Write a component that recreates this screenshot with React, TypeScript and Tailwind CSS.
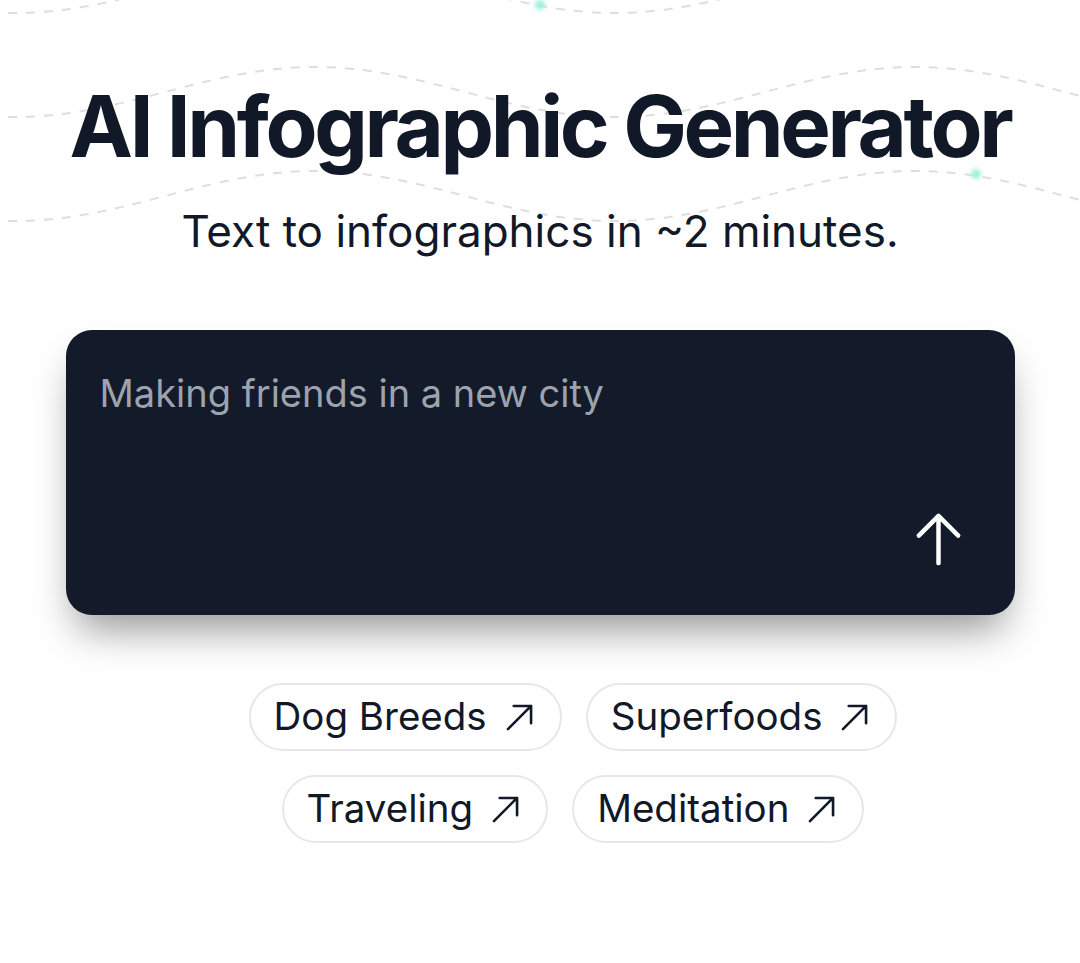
import React from "react";

const PERIOD = 600;
const X0 = 15;
const AMP = 25;

function wavePath(c: number): string {
  const pts: string[] = [];
  for (let x = -10; x <= 1090; x += 5) {
    const y = c + AMP * Math.cos((2 * Math.PI * (x - X0)) / PERIOD);
    pts.push(`${x === -10 ? "M" : "L"}${x} ${y.toFixed(2)}`);
  }
  return pts.join(" ");
}

function Background() {
  return (
    <svg
      className="absolute left-0 top-0 pointer-events-none"
      width="1080"
      height="260"
      viewBox="0 0 1080 260"
      fill="none"
    >
      <defs>
        <filter id="glow" x="-100%" y="-100%" width="300%" height="300%">
          <feGaussianBlur stdDeviation="2" />
        </filter>
      </defs>
      {[-12, 92, 196].map((c) => (
        <path
          key={c}
          d={wavePath(c)}
          stroke="#dedede"
          strokeWidth="2"
          strokeDasharray="9 9"
        />
      ))}
      <circle cx="540" cy="5" r="5" fill="#99f0dc" filter="url(#glow)" />
      <circle cx="976" cy="174" r="5" fill="#99f0dc" filter="url(#glow)" />
    </svg>
  );
}

function ArrowUpRight() {
  return (
    <svg
      width="37"
      height="37"
      viewBox="0 0 24 24"
      fill="none"
      stroke="currentColor"
      strokeWidth="1.7"
      strokeLinecap="round"
      strokeLinejoin="round"
    >
      <path d="m4.5 19.5 15-15m0 0H8.25m11.25 0v11.25" />
    </svg>
  );
}

function Pill({ label }: { label: string }) {
  return (
    <button className="flex h-[68px] items-center gap-[14px] rounded-full border-2 border-[#e5e7eb] bg-white pl-[23px] pr-[22px] text-[38.5px] text-[#111827]">
      <span>{label}</span>
      <ArrowUpRight />
    </button>
  );
}

export default function App() {
  return (
    <div
      className="relative min-h-[963px] w-full overflow-hidden bg-white text-[#111827]"
      style={{ fontFamily: "Inter, 'Noto Sans', sans-serif" }}
    >
      <Background />
      <div className="relative flex flex-col items-center">
        <h1 className="mt-[84px] text-[85px] font-bold leading-none tracking-[-0.04em] text-[#111827]">
          AI Infographic Generator
        </h1>
        <p className="mt-[36px] text-[44px] leading-[52px] text-[#111827]">
          Text to infographics in ~2 minutes.
        </p>
        <div className="mt-[73px] flex h-[285px] w-[949px] flex-col rounded-[26px] bg-[#131a29] pb-[44px] pl-[34px] pr-[45px] pt-[40px] shadow-[0_24px_40px_-10px_rgba(0,0,0,0.42)]">
          <textarea
            className="w-full flex-1 resize-none bg-transparent text-[38px] leading-[46px] text-white outline-none placeholder:text-[#9ca3af]"
            placeholder="Making friends in a new city"
          />
          <div className="flex justify-end">
            <button className="text-white">
              <svg
                width="63"
                height="63"
                viewBox="0 0 24 24"
                fill="none"
                stroke="currentColor"
                strokeWidth="1.7"
                strokeLinecap="round"
                strokeLinejoin="round"
              >
                <path d="M4.5 10.5 12 3m0 0 7.5 7.5M12 3v18" />
              </svg>
            </button>
          </div>
        </div>
        <div className="mt-[68px] flex w-full flex-col items-center gap-6 pl-[66px]">
          <div className="flex gap-6">
            <Pill label="Dog Breeds" />
            <Pill label="Superfoods" />
          </div>
          <div className="flex gap-6">
            <Pill label="Traveling" />
            <Pill label="Meditation" />
          </div>
        </div>
      </div>
    </div>
  );
}
